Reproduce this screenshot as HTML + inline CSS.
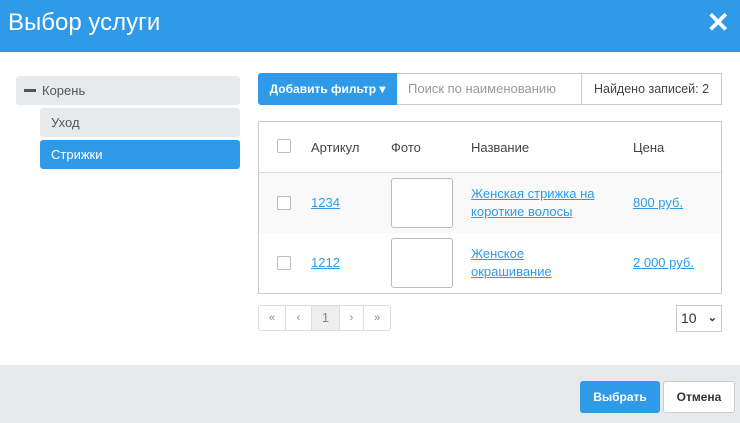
<!DOCTYPE html><html><head><meta charset="utf-8"><style>
*{box-sizing:border-box;margin:0;padding:0}
body{width:740px;height:423px;background:#fff;font-family:"Liberation Sans",sans-serif;font-size:13px;color:#444;position:relative;overflow:hidden}
.a{position:absolute}
.hdr{left:0;top:0;width:740px;height:52px;background:#2f9be8;color:#fff}
.hdr h1{position:absolute;left:8px;top:9px;font-size:24px;font-weight:normal}
.x{position:absolute;right:10px;top:6px;font-size:28px;font-weight:bold}
.tr{border-radius:3px;padding-left:11px;line-height:29px;background:#e8e9eb;color:#555}
a{color:#2f9be8;text-decoration:underline}
.cb{width:14px;height:14px;border:1px solid #bbb;border-radius:2px;background:#fff}
.ph{width:62px;height:50px;border:1px solid #bbb;border-radius:3px;background:#fff}
.pg{border:1px solid #ddd;height:26px;line-height:24px;text-align:center;color:#888;font-size:11px}
</style></head><body>
<div class="a hdr"><h1>Выбор услуги</h1><div class="x">✕</div></div>
<div class="a tr" style="left:16px;top:76px;width:224px;padding-left:8px"><span style="display:inline-block;width:12px;height:3px;background:#555;vertical-align:middle;margin:-3px 6px 0 0"></span>Корень</div>
<div class="a tr" style="left:40px;top:108px;width:200px">Уход</div>
<div class="a tr" style="left:40px;top:140px;width:200px;background:#2f9be8;color:#fff">Стрижки</div>
<div class="a" style="left:258px;top:73px;width:139px;height:32px;background:#2f9be8;color:#fff;font-weight:bold;font-size:12px;line-height:32px;text-align:center;border-radius:3px 0 0 3px">Добавить фильтр ▾</div>
<div class="a" style="left:397px;top:73px;width:185px;height:32px;border:1px solid #ccc;border-left:none;line-height:30px;padding-left:11px;color:#999">Поиск по наименованию</div>
<div class="a" style="left:581px;top:73px;width:141px;height:32px;border:1px solid #ccc;line-height:30px;text-align:center;color:#444;font-size:12.5px">Найдено записей: 2</div>
<div class="a" style="left:258px;top:121px;width:464px;height:173px;border:1px solid #ccc"></div>
<div class="a" style="left:259px;top:172px;width:462px;height:61px;background:#f9f9f9;border-top:1px solid #ddd"></div>
<div class="a cb" style="left:277px;top:139px"></div>
<div class="a" style="left:311px;top:140px">Артикул</div><div class="a" style="left:391px;top:140px">Фото</div><div class="a" style="left:471px;top:140px">Название</div><div class="a" style="left:633px;top:140px">Цена</div>
<div class="a cb" style="left:277px;top:196px"></div>
<a class="a" style="left:311px;top:195px">1234</a><div class="a ph" style="left:391px;top:178px"></div>
<a class="a" style="left:471px;top:185px;line-height:18px;width:132px">Женская стрижка на короткие волосы</a><a class="a" style="left:633px;top:195px">800 руб.</a>
<div class="a cb" style="left:277px;top:256px"></div>
<a class="a" style="left:311px;top:255px">1212</a><div class="a ph" style="left:391px;top:238px"></div>
<a class="a" style="left:471px;top:245px;line-height:18px;width:132px">Женское окрашивание</a><a class="a" style="left:633px;top:255px">2 000 руб.</a>
<div class="a pg" style="left:258px;top:305px;width:28px;border-radius:3px 0 0 3px">«</div>
<div class="a pg" style="left:285px;top:305px;width:27px">‹</div>
<div class="a pg" style="left:311px;top:305px;width:29px;background:#eee;font-size:13px">1</div>
<div class="a pg" style="left:339px;top:305px;width:25px">›</div>
<div class="a pg" style="left:363px;top:305px;width:28px;border-radius:0 3px 3px 0">»</div>
<div class="a" style="left:676px;top:305px;width:46px;height:27px;border:1px solid #ccc;line-height:25px;padding-left:4px;font-size:14px;color:#333">10 <span style="position:absolute;right:4px;top:0;font-size:11px;font-weight:bold">⌄</span></div>
<div class="a" style="left:0;top:365px;width:740px;height:58px;background:#e8e9eb"></div>
<div class="a" style="left:580px;top:381px;width:80px;height:32px;background:#2f9be8;color:#fff;font-weight:bold;font-size:12px;line-height:32px;text-align:center;border-radius:3px">Выбрать</div>
<div class="a" style="left:663px;top:381px;width:72px;height:32px;background:#fff;border:1px solid #ccc;color:#333;font-weight:bold;font-size:12px;line-height:30px;text-align:center;border-radius:3px">Отмена</div>
</body></html>
